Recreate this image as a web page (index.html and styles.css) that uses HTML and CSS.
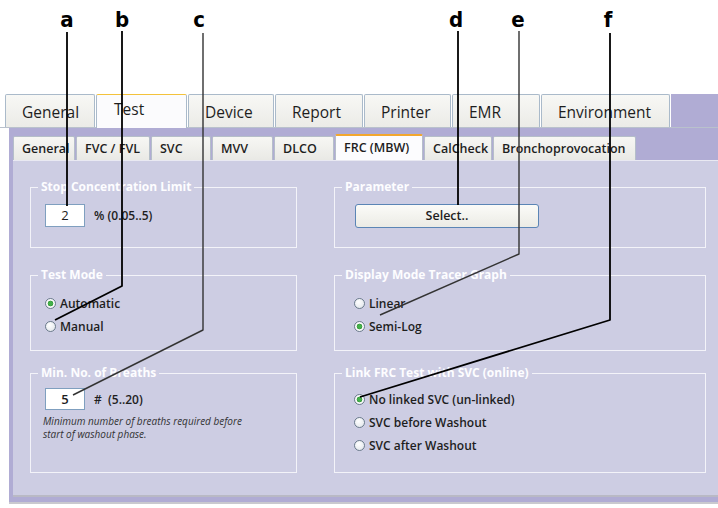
FILE: index.html
```html
<!DOCTYPE html>
<html>
  <head>
    <meta charset="UTF-8">
    <title>FRC (MBW) settings</title>
    <link rel="stylesheet" href="styles.css">
  </head>

  <body>
    <!-- CALLOUTS -->
    <svg class="callouts" width="718" height="508" viewBox="0 0 718 508">
      <g class="letters">
        <text x="67" y="27">a</text>
        <text x="122" y="27">b</text>
        <text x="199" y="27">c</text>
        <text x="456" y="27">d</text>
        <text x="518" y="27">e</text>
        <text x="608" y="27">f</text>
      </g>
      <g fill="none" stroke-linejoin="round">
        <path class="lead" d="M67 32 V206"/>
        <path class="lead" d="M122 31 V286 L55 320"/>
        <path class="lead thin" d="M203 33 V330 L73 395"/>
        <path class="lead" d="M458 31 V205"/>
        <path class="lead thin" d="M519 31 V254 L380 315"/>
        <path class="lead" d="M610 33 V320 L360 397"/>
      </g>
    </svg>

    <div class="head"></div>

    <!-- MAIN TABS -->
    <div class="tabs">
      <div class="tab t-general">General</div>
      <div class="tab t-test active">Test</div>
      <div class="tab t-device">Device</div>
      <div class="tab t-report">Report</div>
      <div class="tab t-printer">Printer</div>
      <div class="tab t-emr">EMR</div>
      <div class="tab t-env">Environment</div>
      <div class="tabs-fill"></div>
    </div>

    <div class="main">
      <!-- TEST SUB TABS -->
      <div class="subtabs">
        <div class="subtab s-general">General</div>
        <div class="subtab s-fvc">FVC / FVL</div>
        <div class="subtab s-svc">SVC</div>
        <div class="subtab s-mvv">MVV</div>
        <div class="subtab s-dlco">DLCO</div>
        <div class="subtab s-frc active">FRC (MBW)</div>
        <div class="subtab s-cal">CalCheck</div>
        <div class="subtab s-broncho">Bronchoprovocation</div>
        <div class="subtabs-fill"></div>
      </div>

      <div class="page">
        <div class="row r1">
          <div class="group left">
            <div class="group-title">Stop Concentration Limit</div>
            <div class="group-body">
              <div class="field">
                <span class="num">2</span>
                <span class="unit">% (0.05..5)</span>
              </div>
            </div>
          </div>
          <div class="group right">
            <div class="group-title">Parameter</div>
            <div class="group-body">
              <div class="btn">Select..</div>
            </div>
          </div>
        </div>

        <div class="row r2">
          <div class="group left">
            <div class="group-title">Test Mode</div>
            <div class="group-body radios">
              <div class="radio-row"><span class="radio on"></span>Automatic</div>
              <div class="radio-row"><span class="radio"></span>Manual</div>
            </div>
          </div>
          <div class="group right">
            <div class="group-title">Display Mode Tracer Graph</div>
            <div class="group-body radios">
              <div class="radio-row"><span class="radio"></span>Linear</div>
              <div class="radio-row"><span class="radio on"></span>Semi-Log</div>
            </div>
          </div>
        </div>

        <div class="row r3">
          <div class="group left">
            <div class="group-title">Min. No. of Breaths</div>
            <div class="group-body">
              <div class="field">
                <span class="num small">5</span>
                <span class="unit">#  (5..20)</span>
              </div>
              <p class="hint">Minimum number of breaths required before<br>start of washout phase.</p>
            </div>
          </div>
          <div class="group right">
            <div class="group-title">Link FRC Test with SVC (online)</div>
            <div class="group-body radios">
              <div class="radio-row"><span class="radio on"></span>No linked SVC (un-linked)</div>
              <div class="radio-row"><span class="radio"></span>SVC before Washout</div>
              <div class="radio-row"><span class="radio"></span>SVC after Washout</div>
            </div>
          </div>
        </div>
      </div>
    </div>
  </body>
</html>
```

FILE: styles.css
```css
/* CSS styles */
body {
  margin: 0;
  width: 718px;
  height: 508px;
  overflow: hidden;
  position: relative;
  background: #fff;
  font-family: "Open Sans", "DejaVu Sans", sans-serif;
  color: #1e1e1e;
}

/* callout letters and leader lines, drawn over the screen */
.callouts {
  position: absolute;
  left: 0;
  top: 0;
  pointer-events: none;
}

.letters text {
  font-family: "DejaVu Sans", sans-serif;
  font-stretch: condensed;
  font-weight: bold;
  font-size: 22px;
  text-anchor: middle;
  fill: #000;
}

.lead {
  stroke: #000;
  stroke-width: 1.8;
}

.lead.thin {
  stroke: #333;
  stroke-width: 1.4;
}

.head {
  height: 94px;
}

/* main tabs */
.tabs {
  display: flex;
  gap: 1px;
  padding-left: 5px;
  height: 33px;
  border-bottom: 1px solid #b9c1cc;
}

.tab {
  box-sizing: border-box;
  height: 33px;
  padding: 7px 0 0 16px;
  font-size: 15.5px;
  line-height: 20px;
  background: linear-gradient(#f8f8f5, #ebebe7);
  border: 1px solid #aabaca;
  border-bottom: none;
  border-radius: 2px 2px 0 0;
}

.tab.active {
  height: 34px;
  margin-bottom: -1px;
  padding: 4px 0 0 17px;
  background: #fbfbfd;
  border-top: 1px solid #f3c23c;
}

.t-general { width: 90px; }
.t-test { width: 91px; }
.t-device { width: 86px; }
.t-report { width: 88px; }
.t-printer { width: 87px; }
.t-emr { width: 88px; }
.t-env { width: 129px; }

.tabs-fill {
  flex: 1;
  background: #b0acd4;
}

.main {
  margin-left: 9px;
  padding: 6px 0 5px 4px;
  background: #b0acd4;
  border-bottom: 2px solid #c9c9cf;
}

/* sub tabs */
.subtabs {
  display: flex;
  align-items: flex-end;
  gap: 1px;
  height: 26px;
}

.subtab {
  box-sizing: border-box;
  height: 24px;
  padding: 3px 0 0 8px;
  font-size: 12.5px;
  font-weight: 600;
  line-height: 18px;
  background: linear-gradient(#f7f7f4, #e9e9e5);
  border: 1px solid #b5bec9;
  border-bottom: none;
  border-radius: 2px 2px 0 0;
}

.subtab.active {
  height: 26px;
  padding-top: 3px;
  background: #fcfcfe;
  border-top: 2px solid #f2a72e;
}

.s-general { width: 62px; }
.s-fvc { width: 74px; }
.s-svc { width: 60px; }
.s-mvv { width: 61px; }
.s-dlco { width: 60px; }
.s-frc { width: 88px; }
.s-cal { width: 68px; }
.s-broncho { width: 143px; }

.subtabs-fill {
  flex: 1;
}

/* page */
.page {
  box-sizing: border-box;
  height: 337px;
  padding: 26px 0 0 17px;
  background: #cdcde3;
  border-top: 1px solid #e9e9f2;
  border-bottom: 2px solid #b9b9c5;
}

.row {
  display: flex;
  gap: 37px;
}

.r2 { margin-top: 27px; }
.r3 { margin-top: 22px; }

.group {
  box-sizing: border-box;
  border: 1px solid #f3f3f9;
}

.group.left { width: 267px; }
.group.right { width: 372px; }

.r1 .group { height: 61px; }
.r2 .group { height: 76px; }
.r3 .group { height: 100px; }

.group-title {
  width: max-content;
  margin: -8px 0 0 7px;
  padding: 0 3px;
  background: #cdcde3;
  color: #fdfdff;
  font-size: 12px;
  font-weight: 700;
  line-height: 14px;
}

.group-body {
  padding: 10px 0 0 14px;
}

.right .group-body {
  padding-left: 19px;
}

.r3 .group-body {
  padding-top: 8px;
}

.field {
  display: flex;
  align-items: center;
}

.num {
  box-sizing: border-box;
  width: 40px;
  height: 23px;
  border: 1px solid #7f9fbf;
  background: #fff;
  text-align: center;
  font-size: 13px;
  line-height: 21px;
}

.num.small {
  height: 22px;
  line-height: 20px;
  font-weight: 600;
}

.unit {
  margin-left: 9px;
  font-size: 12px;
  font-weight: 600;
  white-space: pre;
}

.hint {
  margin: 5px 0 0 -2px;
  font-size: 10px;
  font-style: italic;
  line-height: 13px;
  color: #333;
}

.btn {
  box-sizing: border-box;
  width: 184px;
  height: 24px;
  margin-left: 1px;
  border: 1px solid #5b85b5;
  border-radius: 3px;
  background: linear-gradient(#fbfbf8, #ebebe5);
  text-align: center;
  font-size: 12.5px;
  font-weight: 600;
  line-height: 22px;
}

.radio-row {
  display: flex;
  align-items: center;
  height: 23px;
  font-size: 12px;
  font-weight: 600;
}

.radio {
  box-sizing: border-box;
  width: 11px;
  height: 11px;
  margin-right: 4px;
  border-radius: 50%;
  border: 1px solid #6b7b8c;
  background: radial-gradient(circle at 40% 35%, #ffffff, #dde2e8);
}

.radio.on {
  background: radial-gradient(circle, #43b04a 0 2px, #2c8a30 2.5px, #ffffff 3.2px, #e2e6ea);
}
```
